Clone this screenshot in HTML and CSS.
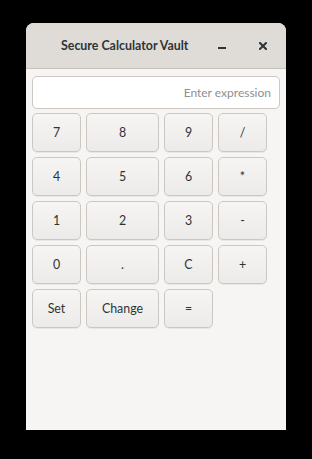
FILE: index.html
```html
<!DOCTYPE html>
<html>
<head>
<meta charset="utf-8">
<link rel="stylesheet" href="styles.css">
</head>
<body>
<div class="window">
  <div class="titlebar">
    <div class="title">Secure Calculator Vault</div>
    <div class="controls">
      <span class="ctl min"><svg width="8" height="8" viewBox="0 0 8 8"><rect x="0" y="5" width="8" height="2" fill="#2e3436"/></svg></span>
      <span class="ctl close"><svg width="8" height="8" viewBox="0 0 8 8"><path d="M1 1L7 7M7 1L1 7" stroke="#2e3436" stroke-width="2" stroke-linecap="square"/></svg></span>
    </div>
  </div>
  <div class="content">
    <div class="entry"><span class="placeholder">Enter expression</span></div>
    <div class="grid">
      <button class="btn">7</button><button class="btn">8</button><button class="btn">9</button><button class="btn">/</button>
      <button class="btn">4</button><button class="btn">5</button><button class="btn">6</button><button class="btn">*</button>
      <button class="btn">1</button><button class="btn">2</button><button class="btn">3</button><button class="btn">-</button>
      <button class="btn">0</button><button class="btn">.</button><button class="btn">C</button><button class="btn">+</button>
      <button class="btn">Set</button><button class="btn">Change</button><button class="btn">=</button>
    </div>
  </div>
</div>
</body>
</html>
```
FILE: styles.css
```css
html, body { margin: 0; padding: 0; background: #000; }
body { width: 312px; height: 459px; padding-top: 23px; box-sizing: border-box; font-family: Lato, "Open Sans", sans-serif; }
.window { margin-left: 26px; width: 260px; height: 407px; background: #f6f5f4; border-radius: 8px 8px 0 0; overflow: hidden; display: flex; flex-direction: column; }
.titlebar { height: 46px; background: #dfdcd8; border-bottom: 1px solid #c6c1bc; box-sizing: border-box; position: relative; display: flex; align-items: center; }
.title { margin-left: 35px; font-weight: bold; font-size: 12.4px; color: #2e3436; }
.controls { position: absolute; right: 0; top: 0; height: 45px; display: flex; align-items: center; }
.ctl { display: flex; width: 8px; height: 8px; }
.min { margin-right: 33px; }
.close { margin-right: 19px; }
.content { padding: 7px 6px; display: flex; flex-direction: column; gap: 4px; }
.entry { height: 33px; box-sizing: border-box; border: 1px solid #cdc7c2; border-radius: 5px; background: #fff; display: flex; align-items: center; justify-content: flex-end; padding-right: 8px; }
.placeholder { color: #8d9091; font-size: 12px; }
.grid { display: grid; grid-template-columns: 49px 73px 49px 49px; grid-auto-rows: 39px; gap: 5px; }
.btn { font-family: inherit; font-size: 12.4px; color: #2e3436; border: 1px solid #cdc7c2; border-radius: 5px; background: linear-gradient(#f6f5f4, #edebe9); box-shadow: 0 1px 0 rgba(0,0,0,0.06); padding: 0; margin: 0; }
```
